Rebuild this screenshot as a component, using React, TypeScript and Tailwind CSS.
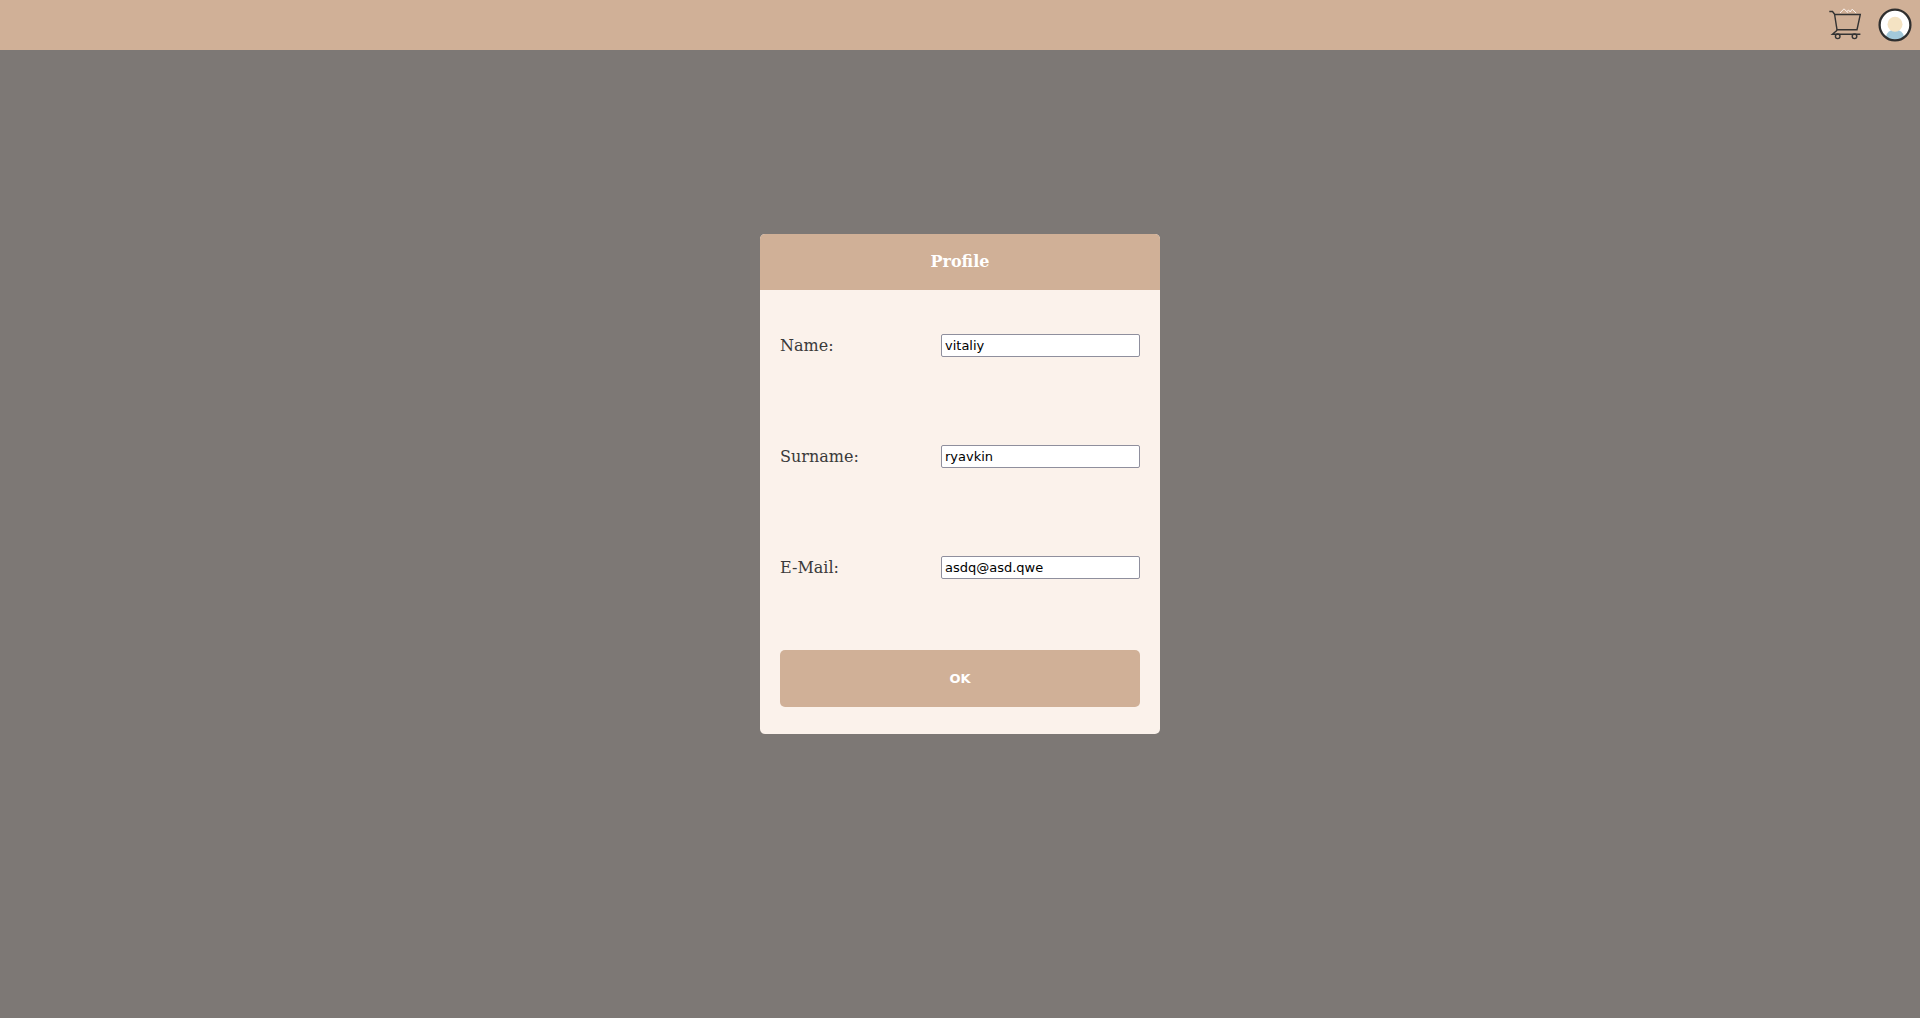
import { useState } from "react";
import type { FormEvent } from "react";

const fields = [
  { id: "name", label: "Name:", type: "text", value: "vitaliy" },
  { id: "surname", label: "Surname:", type: "text", value: "ryavkin" },
  { id: "email", label: "E-Mail:", type: "email", value: "asdq@asd.qwe" },
];

function CartIcon() {
  return (
    <svg viewBox="0 0 34 34" className="size-[34px]" fill="none" stroke="#333" strokeWidth="1.4" aria-hidden="true">
      <path d="M12 5 16 .8 20 4.800M18.800 3.600l1.700-1.600 1.700 2 2-2.800 4 4" stroke="#fbf1eb" strokeWidth="1" />
      <path d="M1.300 3.500h3.200L6.800 6.500h25.500L29 21.700H9L6.600 6.500" />
      <path d="M9 21.700 8.500 22.700 4.400 26.200h28" />
      <circle cx="9.700" cy="28.300" r="2.300" />
      <circle cx="26.500" cy="28.300" r="2.300" />
    </svg>
  );
}

function AvatarIcon() {
  return (
    <svg viewBox="0 0 34 34" className="size-[34px]" aria-hidden="true">
      <clipPath id="avatar-clip">
        <circle cx="17" cy="17" r="15" />
      </clipPath>
      <circle cx="17" cy="17" r="15.5" fill="#fff" />
      <g clipPath="url(#avatar-clip)">
        <ellipse cx="17" cy="29" rx="9" ry="7.500" fill="#a3c9da" />
        <circle cx="17" cy="16.200" r="7.500" fill="#f4e3c3" />
      </g>
      <circle cx="17" cy="17" r="15.400" fill="none" stroke="#2f2f2f" strokeWidth="2.300" />
    </svg>
  );
}

export default function App() {
  const [values, setValues] = useState<Record<string, string>>(
    Object.fromEntries(fields.map((f) => [f.id, f.value])),
  );

  return (
    <div className="flex min-h-screen flex-col bg-[#7d7875]">
      <header className="flex h-[50px] items-center justify-end gap-4 bg-[#d0b097] px-2">
        <button type="button" aria-label="Cart">
          <CartIcon />
        </button>
        <button type="button" aria-label="Profile">
          <AvatarIcon />
        </button>
      </header>
      <main className="flex flex-1 items-center justify-center pb-[100px]">
        <form
          onSubmit={(e: FormEvent) => e.preventDefault()}
          className="w-full max-w-[400px] overflow-hidden rounded-[5px] bg-[#fbf2eb] font-['DejaVu_Serif',serif] text-base text-[#3a3a3a]"
        >
          <h1 className="bg-[#d0b097] py-4 text-center font-bold text-white">Profile</h1>
          {fields.map((f) => (
            <div key={f.id} className="flex h-[111px] items-center justify-between px-5">
              <label htmlFor={f.id}>{f.label}</label>
              <input
                id={f.id}
                type={f.type}
                value={values[f.id]}
                onChange={(e) => setValues({ ...values, [f.id]: e.target.value })}
                className="h-[23px] w-[199px] rounded-[2px] border border-[#8f8f9d] bg-white px-[3px] font-['DejaVu_Sans',sans-serif] text-[13px] text-black"
              />
            </div>
          ))}
          <div className="flex h-[111px] items-center px-5">
            <button
              type="submit"
              className="h-[57px] w-full rounded-[5px] bg-[#d0b097] font-['DejaVu_Sans',sans-serif] text-[13px] font-bold text-white"
            >
              OK
            </button>
          </div>
        </form>
      </main>
    </div>
  );
}
